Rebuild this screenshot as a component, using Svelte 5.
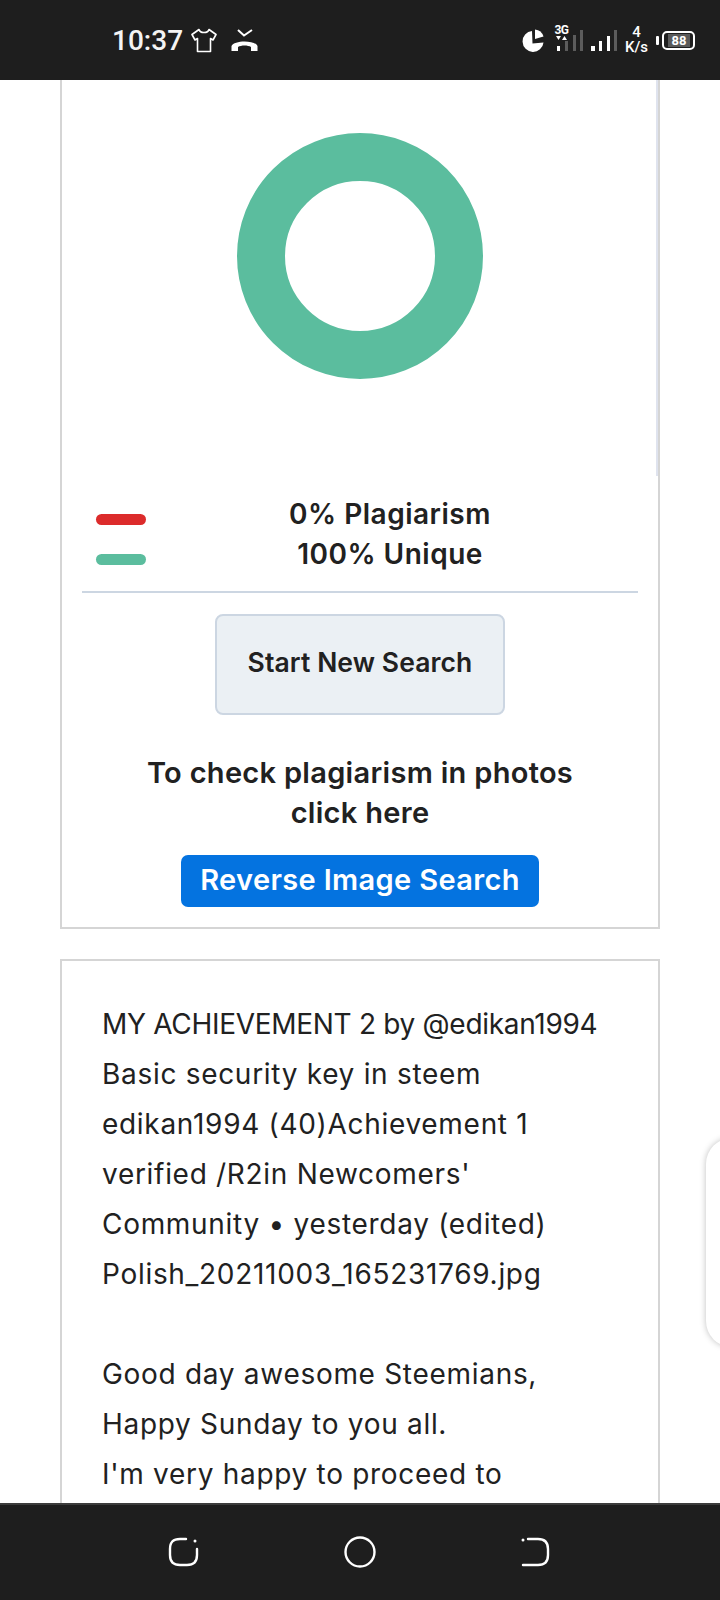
<script>
	const legend = [
		{ label: '0% Plagiarism', color: '#dc2b2b' },
		{ label: '100% Unique', color: '#5bbd9e' }
	];

	const lines = [
		'MY ACHIEVEMENT 2 by @edikan1994',
		'Basic security key in steem',
		'edikan1994 (40)Achievement 1',
		"verified /R2in Newcomers'",
		'Community • yesterday (edited)',
		'Polish_20211003_165231769.jpg',
		'',
		'Good day awesome Steemians,',
		'Happy Sunday to you all.',
		"I'm very happy to proceed to"
	];
</script>

<div class="screen">
	<header class="status">
		<div class="status-left">
			<span class="time">10:37</span>
			<svg class="tee" width="26" height="25" viewBox="0 0 26 25" fill="none" stroke="#fff" stroke-width="1.6" stroke-linejoin="round">
				<path d="M8 1.5 L1 6.500 L4 12 L6.500 10.500 V23.500 H19.500 V10.500 L22 12 L25 6.500 L18 1.500 C17 5.500 9 5.500 8 1.500 Z" />
			</svg>
			<svg class="call" width="27" height="23" viewBox="0 0 27 23">
				<path d="M7 1 L13 6.500 L21 1" fill="none" stroke="#fff" stroke-width="2" />
				<path d="M0.500 22 V17 C3 11 24 11 26.500 17 V22 H20 V18 C17 16 10 16 7 18 V22 Z" fill="#fff" />
			</svg>
		</div>
		<div class="status-right">
			<svg width="22" height="23" viewBox="0 0 22 23">
				<path d="M10 2 A10.500 10.500 0 1 0 21.500 13.500 L10.500 14.500 Z" fill="#fff" />
				<path d="M13 0.500 A10 10 0 0 1 21.500 7.500 L13 10 Z" fill="#fff" />
			</svg>
			<div class="net">
				<span class="g3">3G</span>
				<svg width="13" height="5" viewBox="0 0 13 5"><path d="M1 0 H6 L3.500 4 Z M7 4 H12 L9.500 0 Z" fill="#fff" /></svg>
			</div>
			<svg width="61" height="21" viewBox="0 0 61 21">
				<rect x="0" y="16" width="3" height="5" fill="#fff" />
				<rect x="8" y="11" width="3" height="10" fill="#5c5c5c" />
				<rect x="16" y="5" width="3" height="16" fill="#5c5c5c" />
				<rect x="23" y="0" width="3" height="21" fill="#5c5c5c" />
				<rect x="34" y="16" width="4" height="5" fill="#fff" />
				<rect x="42" y="11" width="3" height="10" fill="#fff" />
				<rect x="50" y="6" width="3" height="15" fill="#fff" />
				<rect x="57" y="0" width="3" height="21" fill="#5c5c5c" />
			</svg>
			<div class="speed"><span>4</span><span>K/s</span></div>
			<div class="battery">
				<span class="nub"></span>
				<span class="cell"><span class="level">88</span></span>
			</div>
		</div>
	</header>

	<main class="content">
		<section class="card result">
			<svg class="donut" width="246" height="246" viewBox="0 0 246 246">
				<circle cx="123" cy="123" r="99" fill="none" stroke="#5bbd9e" stroke-width="48" />
			</svg>

			<div class="legend">
				{#each legend as item}
					<div class="legend-row">
						<span class="swatch" style="background: {item.color}"></span>
						<span class="legend-label">{item.label}</span>
					</div>
				{/each}
			</div>

			<hr />

			<button class="new-search">Start New Search</button>
			<p class="photos">To check plagiarism in photos<br />click here</p>
			<button class="reverse">Reverse Image Search</button>
		</section>

		<section class="card text">
			{#each lines as line, i}
				<p class="line" class:caps={i === 0}>{line}</p>
			{/each}
		</section>

		<span class="scrollbar"></span>
		<aside class="edge-panel"></aside>
	</main>

	<footer class="nav">
		<svg width="32" height="30" viewBox="0 0 32 30" fill="none" stroke="#fff" stroke-width="2.4" stroke-linecap="round">
			<path d="M18 2 H12 C5 2 2 5 2 12 V18 C2 25 5 28 12 28 H19 C26 28 29 25 29 18 V12" />
			<circle cx="27" cy="4" r="1.500" fill="#fff" stroke="none" />
		</svg>
		<svg width="32" height="32" viewBox="0 0 32 32" fill="none" stroke="#fff" stroke-width="2.4">
			<circle cx="16" cy="16" r="14.500" />
		</svg>
		<svg width="32" height="30" viewBox="0 0 32 30" fill="none" stroke="#fff" stroke-width="2.4" stroke-linecap="round">
			<path d="M9 2 H19 C26 2 29 5 29 12 V18 C29 25 26 28 19 28 H4" />
			<circle cx="4" cy="3" r="1.500" fill="#fff" stroke="none" />
		</svg>
	</footer>
</div>

<style>
	:global(body) {
		margin: 0;
		background: #fff;
	}

	.screen {
		display: flex;
		flex-direction: column;
		width: 720px;
		height: 1600px;
		overflow: hidden;
		font-family: Inter, 'Liberation Sans', sans-serif;
		color: #212121;
	}

	.status {
		display: flex;
		justify-content: space-between;
		align-items: center;
		flex: 0 0 80px;
		box-sizing: border-box;
		padding: 0 25px 0 112px;
		background: #1e1e1e;
	}

	.status-left,
	.status-right {
		display: flex;
		align-items: center;
	}

	.time {
		font-family: Roboto, sans-serif;
		font-size: 28px;
		font-weight: 500;
		color: #f4f4f4;
	}

	.tee {
		margin-left: 8px;
	}

	.call {
		margin-left: 14px;
	}

	.net {
		display: flex;
		flex-direction: column;
		align-items: center;
		width: 13px;
		margin: -15px -11px 0 11px;
	}

	.g3 {
		font-family: Roboto, sans-serif;
		font-size: 12px;
		font-weight: 700;
		line-height: 11px;
		letter-spacing: -0.5px;
		color: #fff;
	}

	.speed {
		display: flex;
		flex-direction: column;
		align-items: center;
		margin-left: 7px;
		font-family: Roboto, sans-serif;
		font-size: 15px;
		font-weight: 500;
		line-height: 15px;
		color: #fff;
	}

	.battery {
		display: flex;
		align-items: center;
		margin-left: 8px;
	}

	.nub {
		width: 3px;
		height: 9px;
		margin-right: 3px;
		background: #fff;
		border-radius: 1px;
	}

	.cell {
		display: flex;
		box-sizing: border-box;
		width: 33px;
		height: 19px;
		padding: 1px 3px 1px 4px;
		border: 2px solid #fff;
		border-radius: 5px;
	}

	.level {
		flex: 1;
		font-family: Roboto, sans-serif;
		font-size: 13px;
		font-weight: 700;
		line-height: 13px;
		text-align: center;
		color: #fff;
		background: #5a5a5a;
	}

	.content {
		position: relative;
		flex: 1;
		min-height: 0;
		overflow: hidden;
		padding: 0 60px;
	}

	.card {
		box-sizing: border-box;
		width: 600px;
		border: 2px solid #d5d5d5;
		background: #fff;
	}

	.result {
		display: flex;
		flex-direction: column;
		align-items: center;
		height: 849px;
		padding: 53px 20px 0;
		border-top: 0;
	}

	.donut {
		flex: none;
	}

	.legend {
		align-self: stretch;
		margin-top: 115px;
	}

	.legend-row {
		display: grid;
		grid-template-columns: auto 1fr;
		align-items: center;
		height: 40px;
		padding-left: 14px;
		padding-right: 4px;
	}

	.swatch {
		width: 50px;
		height: 11px;
		margin-top: 10px;
		border-radius: 6px;
	}

	.legend-label {
		font-size: 28px;
		font-weight: 600;
		letter-spacing: 0.500px;
		text-align: center;
		white-space: nowrap;
	}

	hr {
		align-self: stretch;
		height: 2px;
		margin: 17px 0 0;
		border: 0;
		background: #ccd6e2;
	}

	button {
		font-family: inherit;
		cursor: pointer;
	}

	.new-search {
		width: 290px;
		height: 101px;
		margin-top: 21px;
		padding: 0 0 6px;
		border: 2px solid #ccd6e2;
		border-radius: 8px;
		background: #ebf0f4;
		font-size: 26.500px;
		font-weight: 600;
		letter-spacing: 0.100px;
		color: #212121;
	}

	.photos {
		margin: 38px 0 0;
		font-size: 29px;
		font-weight: 600;
		line-height: 40px;
		letter-spacing: 0.300px;
		text-align: center;
	}

	.reverse {
		width: 358px;
		height: 52px;
		margin-top: 22px;
		padding: 0 0 4px;
		border: 0;
		border-radius: 7px;
		background: #0473e0;
		font-size: 29px;
		font-weight: 600;
		letter-spacing: 0.350px;
		color: #fff;
		white-space: nowrap;
	}

	.text {
		margin-top: 30px;
		padding: 38px 40px;
		height: 700px;
	}

	.line {
		height: 50px;
		margin: 0;
		font-size: 28px;
		line-height: 50px;
		letter-spacing: 0.700px;
		white-space: nowrap;
	}

	.caps {
		letter-spacing: -0.300px;
	}

	.scrollbar {
		position: absolute;
		top: 0;
		left: 656px;
		width: 2px;
		height: 396px;
		background: #dfe3ee;
	}

	.edge-panel {
		position: absolute;
		top: 1058px;
		left: 706px;
		width: 60px;
		height: 209px;
		border-radius: 26px;
		background: #fff;
		box-shadow: 0 0 6px rgba(0, 0, 0, 0.25);
	}

	.nav {
		display: flex;
		justify-content: space-between;
		align-items: center;
		flex: 0 0 97px;
		box-sizing: border-box;
		padding: 0 169px 2px 168px;
		border-top: 2px solid #3c3c3c;
		background: #1e1e1e;
	}
</style>
